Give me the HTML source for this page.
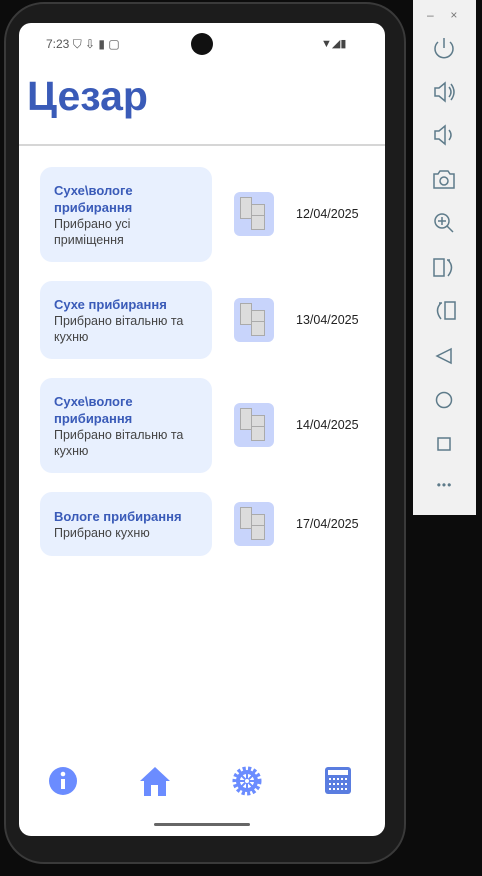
<!DOCTYPE html>
<html><head><meta charset="utf-8"><style>
*{margin:0;padding:0;box-sizing:border-box}
body{width:482px;height:876px;background:#0c0c0c;position:relative;overflow:hidden;font-family:"Liberation Sans","DejaVu Sans",sans-serif}
.phone{position:absolute;left:4px;top:2px;width:402px;height:862px;background:#1c1c1c;border-radius:40px;border:2px solid #3a3a3a}
.screen{position:absolute;left:19px;top:23px;width:366px;height:813px;background:#fff;border-radius:12px;overflow:hidden}
.panel{position:absolute;left:413px;top:0;width:63px;height:515px;background:#f1f1f1}
.card{position:absolute;left:21px;width:172px;background:#e8f0fe;border-radius:12px;padding:0 14px;display:flex;flex-direction:column;justify-content:center}
.card b{color:#3a5bb8;font-size:13px;line-height:17px}
.card span{color:#444;font-size:12.5px;line-height:16px}
.ic{position:absolute;left:215px;width:40px;height:44px;background:#c8d4fb;border-radius:6px}
.ic i{position:absolute;background:#dcdcdc;border:1px solid #aaa}
.date{position:absolute;left:277px;font-size:12.5px;color:#222}
</style></head><body>
<div class="phone"></div>
<div class="screen">
 <div style="position:absolute;left:27px;top:14px;font-size:12px;color:#555">7:23 ⛉ ⇩ ▮ ▢</div>
 <div style="position:absolute;left:172px;top:10px;width:22px;height:22px;border-radius:50%;background:#111"></div>
 <div style="position:absolute;left:302px;top:14px;font-size:11px;color:#444">▼◢▮</div>
 <div style="position:absolute;left:8px;top:50px;font-size:41px;font-weight:bold;color:#3a5bb8">Цезар</div>
 <div style="position:absolute;left:0;top:121px;width:366px;height:2px;background:#d6d6d6"></div>

 <div class="card" style="top:144px;height:95px"><b>Сухе\вологе прибирання</b><span>Прибрано усі приміщення</span></div>
 <div class="ic" style="top:169px"><i style="left:6px;top:5px;width:12px;height:22px"></i><i style="left:17px;top:12px;width:14px;height:12px"></i><i style="left:17px;top:23px;width:14px;height:15px"></i></div><div class="date" style="top:184px">12/04/2025</div>
 <div class="card" style="top:258px;height:78px"><b>Сухе прибирання</b><span>Прибрано вітальню та кухню</span></div>
 <div class="ic" style="top:275px"><i style="left:6px;top:5px;width:12px;height:22px"></i><i style="left:17px;top:12px;width:14px;height:12px"></i><i style="left:17px;top:23px;width:14px;height:15px"></i></div><div class="date" style="top:290px">13/04/2025</div>
 <div class="card" style="top:355px;height:95px"><b>Сухе\вологе прибирання</b><span>Прибрано вітальню та кухню</span></div>
 <div class="ic" style="top:380px"><i style="left:6px;top:5px;width:12px;height:22px"></i><i style="left:17px;top:12px;width:14px;height:12px"></i><i style="left:17px;top:23px;width:14px;height:15px"></i></div><div class="date" style="top:395px">14/04/2025</div>
 <div class="card" style="top:469px;height:64px"><b>Вологе прибирання</b><span>Прибрано кухню</span></div>
 <div class="ic" style="top:479px"><i style="left:6px;top:5px;width:12px;height:22px"></i><i style="left:17px;top:12px;width:14px;height:12px"></i><i style="left:17px;top:23px;width:14px;height:15px"></i></div><div class="date" style="top:494px">17/04/2025</div>

 <svg style="position:absolute;left:0;top:738px" width="366" height="40">
  <circle cx="44" cy="20" r="14" fill="#6b8cff"/><rect x="42" y="18" width="4" height="10" fill="#fff"/><circle cx="44" cy="13" r="2.3" fill="#fff"/>
  <path d="M121 20 L136 6 L151 20 L147 20 L147 35 L125 35 L125 20Z" fill="#6b8cff"/><rect x="132" y="24" width="7" height="11" fill="#fff"/>
  <circle cx="228" cy="20" r="12" fill="none" stroke="#6b8cff" stroke-width="5" stroke-dasharray="3 2.2"/><circle cx="228" cy="20" r="9" fill="none" stroke="#6b8cff" stroke-width="4"/>
  <path d="M228 11V29M219 20H237M222 14L234 26M234 14L222 26" stroke="#6b8cff" stroke-width="2"/><circle cx="228" cy="20" r="2" fill="#fff"/>
  <rect x="306" y="6" width="26" height="27" rx="3" fill="#5a7de0"/><rect x="309" y="9" width="20" height="5" fill="#fff"/>
  <g fill="#fff"><rect x="310" y="17" width="2" height="2"/><rect x="314" y="17" width="2" height="2"/><rect x="318" y="17" width="2" height="2"/><rect x="322" y="17" width="2" height="2"/><rect x="326" y="17" width="2" height="2"/>
  <rect x="310" y="22" width="2" height="2"/><rect x="314" y="22" width="2" height="2"/><rect x="318" y="22" width="2" height="2"/><rect x="322" y="22" width="2" height="2"/><rect x="326" y="22" width="2" height="2"/>
  <rect x="310" y="27" width="2" height="2"/><rect x="314" y="27" width="2" height="2"/><rect x="318" y="27" width="2" height="2"/><rect x="322" y="27" width="2" height="2"/><rect x="326" y="27" width="2" height="2"/></g>
 </svg>
 <div style="position:absolute;left:135px;top:800px;width:96px;height:3px;border-radius:2px;background:#666"></div>
</div>
<div class="panel">
 <div style="position:absolute;left:14px;top:8px;font-size:12px;color:#777">–&nbsp;&nbsp;&nbsp;&nbsp;&nbsp;×</div>
 <svg width="63" height="515" style="position:absolute;left:0;top:0" fill="none" stroke="#5e7b8a" stroke-width="1.5">
  <path d="M25 42A9 9 0 1 0 37 42M31 38V48"/>
  <path d="M22 88H26L32 83V101L26 96H22Z M36 87Q40 92 36 97 M38 84Q44 92 38 100"/>
  <path d="M22 131H26L32 126V144L26 139H22Z M36 130Q40 135 36 140"/>
  <path d="M21 174H25L27 171H35L37 174H41V188H21Z"/><circle cx="31" cy="181" r="4"/>
  <circle cx="29" cy="221" r="7"/><path d="M34 226L40 232M29 217V225M25 221H33"/>
  <rect x="21" y="259" width="10" height="17"/><path d="M35 260Q42 267 35 276M34 260H37"/>
  <rect x="32" y="302" width="10" height="17"/><path d="M28 303Q21 310 28 319M29 303H26"/>
  <path d="M38 349L24 356L38 363Z"/>
  <circle cx="31" cy="400" r="7.5"/>
  <rect x="25" y="438" width="12" height="12"/>
 </svg>
 <div style="position:absolute;left:0;top:478px;width:63px;text-align:center;font-size:12px;color:#5e7b8a;letter-spacing:1px">•••</div>
</div>
</body></html>
